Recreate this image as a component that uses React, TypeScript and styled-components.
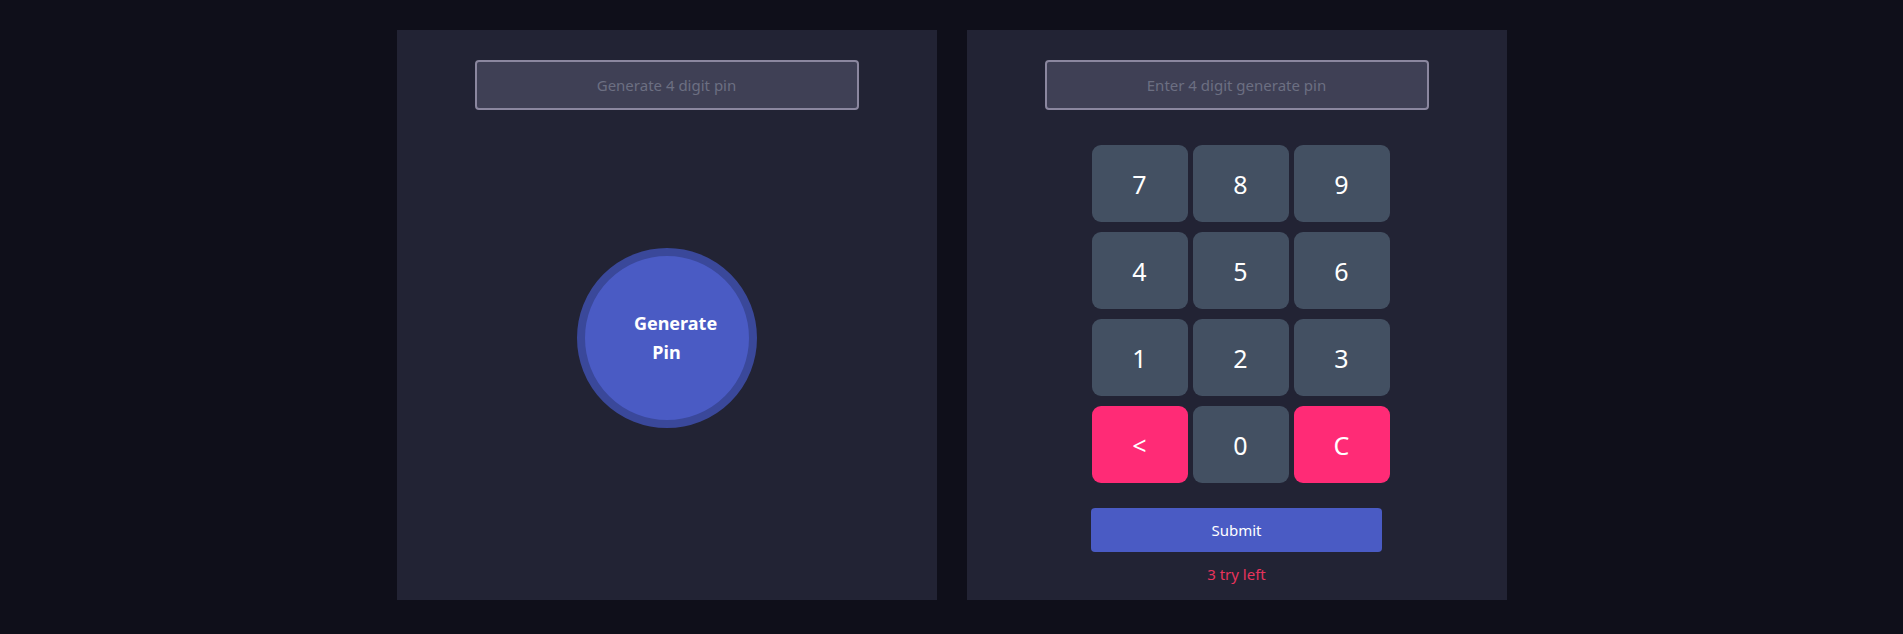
import styled, { createGlobalStyle } from 'styled-components';

const GlobalStyle = createGlobalStyle`
  html, body {
    margin: 0;
    padding: 0;
    background: #0f0f1a;
    font-family: "Noto Sans", "Open Sans", sans-serif;
  }
`;

const Page = styled.div`
  display: flex;
  justify-content: center;
  gap: 30px;
  padding-top: 30px;
  height: 634px;
  box-sizing: border-box;
`;

const Panel = styled.div`
  width: 540px;
  height: 570px;
  background: #222334;
  display: flex;
  flex-direction: column;
  align-items: center;
  padding-top: 30px;
  box-sizing: border-box;
`;

const PinInput = styled.input`
  width: 384px;
  height: 50px;
  box-sizing: border-box;
  background: #3f4055;
  border: 2px solid #8b879f;
  border-radius: 4px;
  color: #fff;
  font-family: inherit;
  font-size: 15px;
  text-align: center;
  outline: none;
  &::placeholder {
    color: #6c6f82;
  }
`;

const GenerateButton = styled.button`
  margin-top: 138px;
  width: 180px;
  height: 180px;
  border-radius: 50%;
  border: 8px solid #3a489a;
  background: #4a5bc4;
  color: #fff;
  font-family: inherit;
  font-size: 18px;
  font-weight: 700;
  line-height: 29px;
  padding: 0 24px;
  text-align: center;
  cursor: pointer;
`;

const Spacer = styled.span`
  display: inline-block;
  width: 18px;
`;

const Keypad = styled.div`
  margin-top: 35px;
  margin-left: 8px;
  display: grid;
  grid-template-columns: repeat(3, 96px);
  grid-auto-rows: 77px;
  column-gap: 5px;
  row-gap: 10px;
`;

const Key = styled.button<{ $accent?: boolean }>`
  border: none;
  border-radius: 9px;
  background: ${(p) => (p.$accent ? '#ff2b76' : '#435062')};
  color: #fff;
  font-family: inherit;
  font-size: 25px;
  cursor: pointer;
`;

const SubmitButton = styled.button`
  margin-top: 25px;
  width: 291px;
  height: 44px;
  border: none;
  border-radius: 4px;
  background: #4a5bc4;
  color: #fff;
  font-family: inherit;
  font-size: 15px;
  cursor: pointer;
`;

const TryLeft = styled.p`
  margin: 12px 0 0;
  color: #e8335c;
  font-size: 15px;
  line-height: 20px;
`;

const keys: { label: string; accent?: boolean }[] = [
  { label: '7' },
  { label: '8' },
  { label: '9' },
  { label: '4' },
  { label: '5' },
  { label: '6' },
  { label: '1' },
  { label: '2' },
  { label: '3' },
  { label: '<', accent: true },
  { label: '0' },
  { label: 'C', accent: true },
];

export default function App() {
  return (
    <>
      <GlobalStyle />
      <Page>
        <Panel>
          <PinInput type="text" placeholder="Generate 4 digit pin" readOnly />
          <GenerateButton>
            <Spacer />
            Generate Pin
          </GenerateButton>
        </Panel>
        <Panel>
          <PinInput type="text" placeholder="Enter 4 digit generate pin" />
          <Keypad>
            {keys.map((k) => (
              <Key key={k.label} $accent={k.accent}>
                {k.label}
              </Key>
            ))}
          </Keypad>
          <SubmitButton>Submit</SubmitButton>
          <TryLeft>3 try left</TryLeft>
        </Panel>
      </Page>
    </>
  );
}
